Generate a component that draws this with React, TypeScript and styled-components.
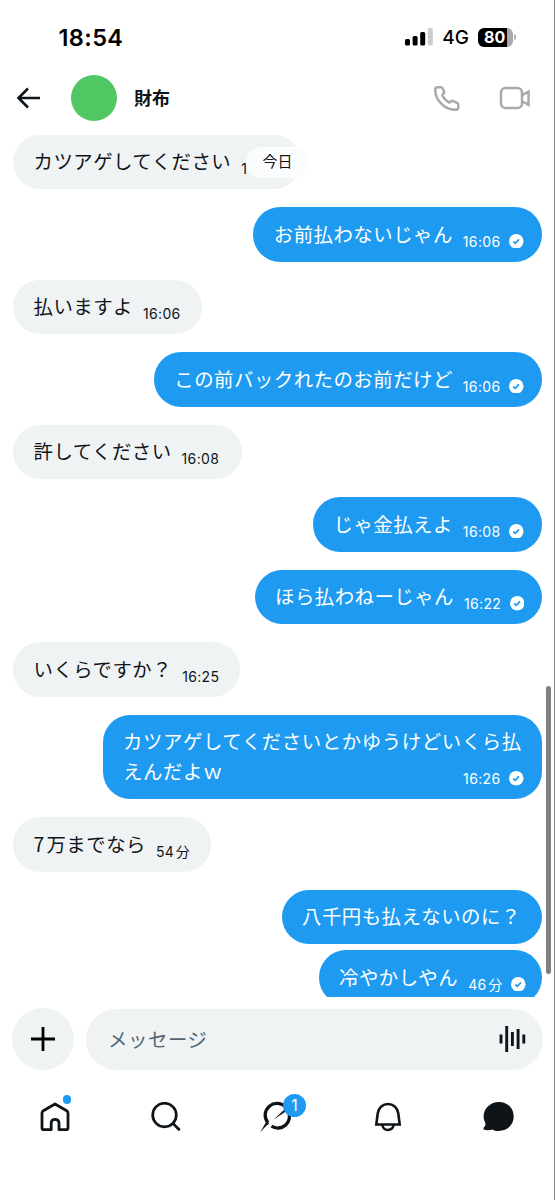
import React from 'react';
import styled, { createGlobalStyle } from 'styled-components';

const Global = createGlobalStyle`
  * { box-sizing: border-box; }
  body { margin: 0; background: #fff; }
`;

const Screen = styled.main`
  width: 555px;
  height: 1200px;
  display: flex;
  flex-direction: column;
  background: #fff;
  border-right: 1px solid #8b8c8e;
  color: #0f1419;
  font-family: Inter, "Noto Sans CJK JP", sans-serif;
  overflow: hidden;
`;

const StatusBar = styled.header`
  height: 74px;
  flex: none;
  display: flex;
  align-items: center;
  justify-content: space-between;
  padding: 0 38px 0 58.5px;
  color: #000;
`;

const Clock = styled.span`
  font-size: 23.5px;
  font-weight: 600;
  letter-spacing: 0.4px;
`;

const StatusRight = styled.div`
  display: flex;
  align-items: center;
`;

const Network = styled.span`
  font-size: 19px;
  font-weight: 500;
  margin: 0 9px 0 9px;
`;

const Battery = styled.div`
  width: 35px;
  height: 19px;
  border-radius: 6px;
  background: linear-gradient(90deg, #000 0 29px, #a9a9a9 29px);
  color: #fff;
  font-size: 16px;
  line-height: 19px;
  font-weight: 700;
  padding-left: 6px;
`;

const BatteryTip = styled.i`
  width: 2px;
  height: 6px;
  margin-left: 1px;
  border-radius: 0 3px 3px 0;
  background: #b5b5b5;
`;

const ChatHeader = styled.header`
  height: 48px;
  flex: none;
  display: flex;
  align-items: center;
  padding: 0 23px 0 16px;
`;

const Avatar = styled.div`
  width: 46px;
  height: 46px;
  border-radius: 50%;
  background: #50c763;
  margin: 0 17px 0 30px;
`;

const Name = styled.h1`
  margin: 0;
  padding-top: 2px;
  flex: 1;
  font-size: 18px;
  line-height: 24px;
  font-weight: 700;
`;

const HeaderIcons = styled.div`
  display: flex;
  gap: 38px;
`;

const Thread = styled.section`
  position: relative;
  height: 874.5px;
  flex: none;
  overflow: hidden;
  display: flex;
  flex-direction: column;
  padding: 12.5px 12px 0 13px;
`;

const Bubble = styled.div<{ $mine?: boolean; $tight?: boolean; $width?: number }>`
  flex: none;
  display: flex;
  flex-direction: column;
  align-self: ${p => (p.$mine ? 'flex-end' : 'flex-start')};
  ${p => p.$width && `width: ${p.$width}px;`}
  padding: 11.5px ${p => (p.$mine ? '20px' : '21px')} 13px 20.5px;
  margin-bottom: ${p => (p.$tight ? '6px' : '18px')};
  border-radius: 27.25px;
  background: ${p => (p.$mine ? '#1e9bf1' : '#eff3f4')};
  color: ${p => (p.$mine ? '#fff' : '#0f1419')};
`;

const Line = styled.div`
  display: flex;
  align-items: flex-end;
  justify-content: space-between;
  height: 30px;
`;

const Text = styled.span<{ $wide?: boolean }>`
  font-family: "Noto Sans CJK JP", sans-serif;
  font-size: 19.4px;
  line-height: 30px;
  letter-spacing: ${p => (p.$wide ? '0.6px' : '0.5px')};
  white-space: pre;
`;

const Meta = styled.span<{ $mine?: boolean }>`
  display: flex;
  align-items: center;
  gap: 8.5px;
  height: 15px;
  flex: 1;
  justify-content: ${p => (p.$mine ? 'flex-end' : 'flex-start')};
  margin: 0 ${p => (p.$mine ? '-1.5px' : '0')} 0 10px;
  font-size: 14px;
  letter-spacing: 0.35px;
  white-space: pre;
`;

const DayPill = styled.div`
  position: absolute;
  left: 246px;
  top: 25px;
  width: 63px;
  height: 31px;
  border-radius: 16px;
  background: rgba(252, 252, 253, 0.93);
  font-size: 15px;
  line-height: 30px;
  text-align: center;
`;

const ScrollThumb = styled.div`
  position: absolute;
  right: 3.5px;
  top: 564px;
  width: 5px;
  height: 288px;
  border-radius: 3px;
  background: #808080;
`;

const Composer = styled.div`
  flex: none;
  display: flex;
  align-items: center;
  gap: 12px;
  padding: 11.5px 11px 0 12px;
`;

const AddButton = styled.button`
  width: 62px;
  height: 62px;
  border: 0;
  border-radius: 50%;
  padding: 0;
  background: #eff3f4;
  display: grid;
  place-items: center;
`;

const Field = styled.div`
  flex: 1;
  height: 61px;
  border-radius: 31px;
  background: #eff3f4;
  display: flex;
  align-items: center;
  justify-content: space-between;
  padding: 0 17.5px 0 22px;
`;

const Placeholder = styled.span`
  padding-bottom: 2px;
  font-size: 19.4px;
  letter-spacing: 0.6px;
  color: #536471;
`;

const TabBar = styled.nav`
  flex: none;
  display: grid;
  grid-template-columns: repeat(5, 110.8px);
  height: 92px;
  margin-top: 1px;
`;

const Tab = styled.div`
  position: relative;
  display: grid;
  place-items: center;
`;

const Dot = styled.i`
  position: absolute;
  left: 62.5px;
  top: 24px;
  width: 8.5px;
  height: 8.5px;
  border-radius: 50%;
  background: #1e9bf1;
`;

const Badge = styled.span`
  position: absolute;
  left: 61.5px;
  top: 23px;
  width: 23px;
  height: 23px;
  border-radius: 50%;
  background: #1e9bf1;
  color: #fff;
  font-size: 16px;
  line-height: 23px;
  text-align: center;
`;

const Check = () => (
  <svg width="14.5" height="14.5" viewBox="0 0 14.5 14.5">
    <circle cx="7.25" cy="7.25" r="7.25" fill="#fff" />
    <path d="M4.3 7.5 6.3 9.3 10 5.3" fill="none" stroke="#1e9bf1" strokeWidth="1.7" />
  </svg>
);

type Message = { lines: string[]; time?: string; mine?: boolean; tight?: boolean; width?: number };

const messages: Message[] = [
  { lines: ['カツアゲしてください'], time: '1', width: 288 },
  { lines: ['お前払わないじゃん'], time: '16:06', mine: true },
  { lines: ['払いますよ'], time: '16:06' },
  { lines: ['この前バックれたのお前だけど'], time: '16:06', mine: true },
  { lines: ['許してください'], time: '16:08', width: 229 },
  { lines: ['じゃ金払えよ'], time: '16:08', mine: true },
  { lines: ['ほら払わねーじゃん'], time: '16:22', mine: true, width: 287.5 },
  { lines: ['いくらですか？'], time: '16:25' },
  { lines: ['カツアゲしてくださいとかゆうけどいくら払', 'えんだよｗ'], time: '16:26', mine: true, width: 439.5 },
  { lines: ['7\u200a万までなら'], time: '54\u200a分' },
  { lines: ['八千円も払えないのに？'], mine: true, tight: true, width: 260.5 },
  { lines: ['冷やかしやん'], time: '46\u200a分', mine: true, width: 223.5 },
];

export default function App() {
  return (
    <>
      <Global />
      <Screen>
        <StatusBar>
          <Clock>18:54</Clock>
          <StatusRight>
            <svg width="28" height="18" viewBox="0 0 28 18">
              <rect x="0" y="11" width="5" height="6.5" rx="1.5" />
              <rect x="7.6" y="8" width="5" height="9.5" rx="1.5" />
              <rect x="15.2" y="4" width="5" height="13.5" rx="1.5" />
              <rect x="22.8" y="0" width="5" height="17.5" rx="1.5" fill="#ccc" />
            </svg>
            <Network>4G</Network>
            <Battery>80</Battery>
            <BatteryTip />
          </StatusRight>
        </StatusBar>
        <ChatHeader>
          <svg width="25" height="22" viewBox="0 0 25 22" fill="none" stroke="#0f1419" strokeWidth="2.6">
            <path d="M24 11H2.5M12 1.5 2.5 11 12 20.5" />
          </svg>
          <Avatar />
          <Name>財布</Name>
          <HeaderIcons>
            <svg width="30" height="30" viewBox="0 0 30 30" fill="none" stroke="#a7a9ac" strokeWidth="2.5" strokeLinejoin="round">
              <path d="M6.700 4.200H9.800Q11 4.200 11.500 5.300L13.300 9.200 11.300 12.500C12.800 15.500 15.300 18 18.500 19.500L21 17.700 26.200 19.800Q27.300 20.300 27.300 21.500V24.300Q27.300 26.800 24.800 26.800C14 26.800 4.200 17.500 4.200 6.700Q4.200 4.200 6.700 4.200Z" />
            </svg>
            <svg width="32" height="30" viewBox="0 0 32 30" fill="none" stroke="#a7a9ac" strokeWidth="2.5">
              <rect x="2" y="5" width="21" height="20" rx="4.5" />
              <path d="M23.500 12 29.500 8.600v13.300L23.500 18.500" />
            </svg>
          </HeaderIcons>
        </ChatHeader>
        <Thread>
          {messages.map((m, i) => (
            <Bubble key={i} $mine={m.mine} $tight={m.tight} $width={m.width}>
              {m.lines.map((line, n) => (
                <Line key={n}>
                  <Text $wide={m.lines.length > 1}>{line}</Text>
                  {m.time && n === m.lines.length - 1 && (
                    <Meta $mine={m.mine}>
                      {m.time}
                      {m.mine && <Check />}
                    </Meta>
                  )}
                </Line>
              ))}
            </Bubble>
          ))}
          <DayPill>今日</DayPill>
          <ScrollThumb />
        </Thread>
        <Composer>
          <AddButton>
            <svg width="24" height="24" viewBox="0 0 24 24" stroke="#000" strokeWidth="2.8">
              <path d="M12 0v24M0 12h24" />
            </svg>
          </AddButton>
          <Field>
            <Placeholder>メッセージ</Placeholder>
            <svg width="27" height="26" viewBox="0 0 27 26" stroke="#0f1419" strokeWidth="2.9">
              <path d="M2 8.500v9M7.700 0v26M13.400 6v14M19.100 3v20M24.800 8.500v9" />
            </svg>
          </Field>
        </Composer>
        <TabBar>
          <Tab>
            <svg width="30" height="30" viewBox="0 0 30 30" fill="none" stroke="#0f1419" strokeWidth="2.8" strokeLinejoin="round">
              <path d="M15 2 26.700 8.800Q28 9.600 28 11V26Q28 27.700 26.300 27.700H19V20.500A4 4 0 0 0 11.200 20.500V27.700H3.700Q2 27.700 2 26V11Q2 9.600 3.300 8.800Z" />
            </svg>
            <Dot />
          </Tab>
          <Tab>
            <svg width="30" height="30" viewBox="0 0 30 30" fill="none" stroke="#0f1419" strokeWidth="2.7">
              <circle cx="13.500" cy="13" r="11.800" />
              <path d="M21.800 21.300 28.700 28.200" />
            </svg>
          </Tab>
          <Tab>
            <svg width="34" height="32" viewBox="0 0 34 32" fill="none" stroke="#0f1419" strokeWidth="3.3">
              <path d="M8 21.800A11.700 11.700 0 0 1 26 6.500M11.500 25.200A11.700 11.700 0 0 0 28.200 10" />
              <path d="M0 31.500 6.300 20.800 9.500 22.300C6.500 24.500 3.500 27.500 0 31.500ZM13.500 18.800 25.500 7.500 28 9Z" fill="#0f1419" stroke="none" />
            </svg>
            <Badge>1</Badge>
          </Tab>
          <Tab>
            <svg width="28" height="30" viewBox="0 0 28 30" fill="none" stroke="#0f1419" strokeWidth="2.6">
              <path d="M2.300 22.500 3.700 11.500C4.500 5.500 9 2 14 2s9.500 3.500 10.300 9.500L25.700 22.500ZM8.500 23a5.500 5 0 0 0 11 0" />
            </svg>
          </Tab>
          <Tab>
            <svg width="31" height="30" viewBox="0 0 31 30" fill="#0f1419">
              <path d="M16 0C24.500 0 30.700 6.300 30.700 14.500S24.500 29 15.700 29C13 29 11 28.500 9.500 27.500 7 28.300 3 28.500.5 27.500 .4 26 .8 25 2 24 2.800 23 2.500 21 1.500 19 .800 17.500 .600 16 .600 14.500 .600 6.300 7.500 0 16 0Z" />
            </svg>
          </Tab>
        </TabBar>
      </Screen>
    </>
  );
}
